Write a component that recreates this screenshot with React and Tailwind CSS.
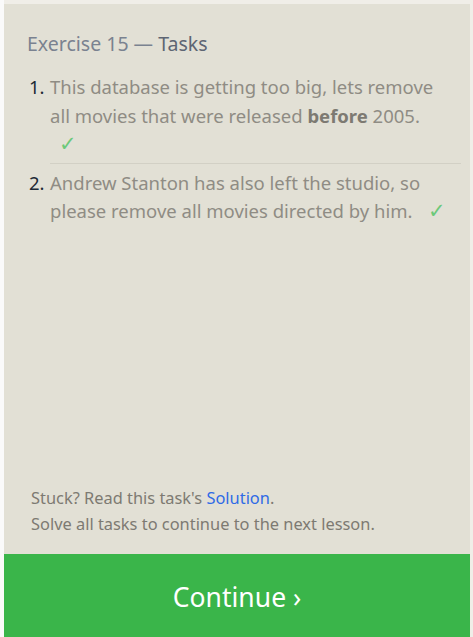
export default function App() {
  return (
    <div className="h-[637px] w-[473px] overflow-hidden bg-[#f0eee8] pt-[4px] pl-[4px] pr-[3px] font-['Noto_Sans',sans-serif]">
      <div className="relative flex h-full">
        <div className="absolute -left-[4px] top-[-4px] h-[637px] w-[4px] bg-[#fafafa]" />
        <div className="flex h-full w-full flex-col bg-[#e2e0d5]">
          <div className="flex-1 pl-[23px] pr-[9px] pt-[27px]">
            <h2 className="text-[19.5px] leading-[26px] text-[#7a8290]">
              Exercise 15 — <span className="text-[#5d6573]">Tasks</span>
            </h2>
            <ol className="mt-[16px] text-[18.5px] leading-[28.5px] text-[#8f8c84]">
              <li className="flex">
                <span className="w-[23px] shrink-0 pl-[2px] text-[#1e2a36]">1.</span>
                <div className="flex-1 border-b border-[#d2d0c5] pb-[4px]">
                  <p className="pr-[25px]">
                    This database is getting too big, lets remove all movies that were released{' '}
                    <b className="font-bold text-[#7d7a72]">before</b> 2005.{' '}
                    <span className="ml-[9px] text-[21px] leading-none text-[#6cc97a]">✓</span>
                  </p>
                </div>
              </li>
              <li className="flex pt-[5px]">
                <span className="w-[23px] shrink-0 pl-[2px] text-[#1e2a36]">2.</span>
                <p className="flex-1">
                  Andrew Stanton has also left the studio, so please remove all movies directed by him.{' '}
                  <span className="ml-[11px] text-[21px] leading-none text-[#6cc97a]">✓</span>
                </p>
              </li>
            </ol>
          </div>
          <div className="pb-[17px] pl-[27px] text-[16.4px] leading-[26px] text-[#7d7a72]">
            <p>
              Stuck? Read this task's <a className="text-[#2f6be6]">Solution</a>.
            </p>
            <p>Solve all tasks to continue to the next lesson.</p>
          </div>
          <button className="h-[83px] w-full bg-[#3ab54a] pt-[5px] text-[26.5px] text-white">Continue ›</button>
        </div>
      </div>
    </div>
  );
}
